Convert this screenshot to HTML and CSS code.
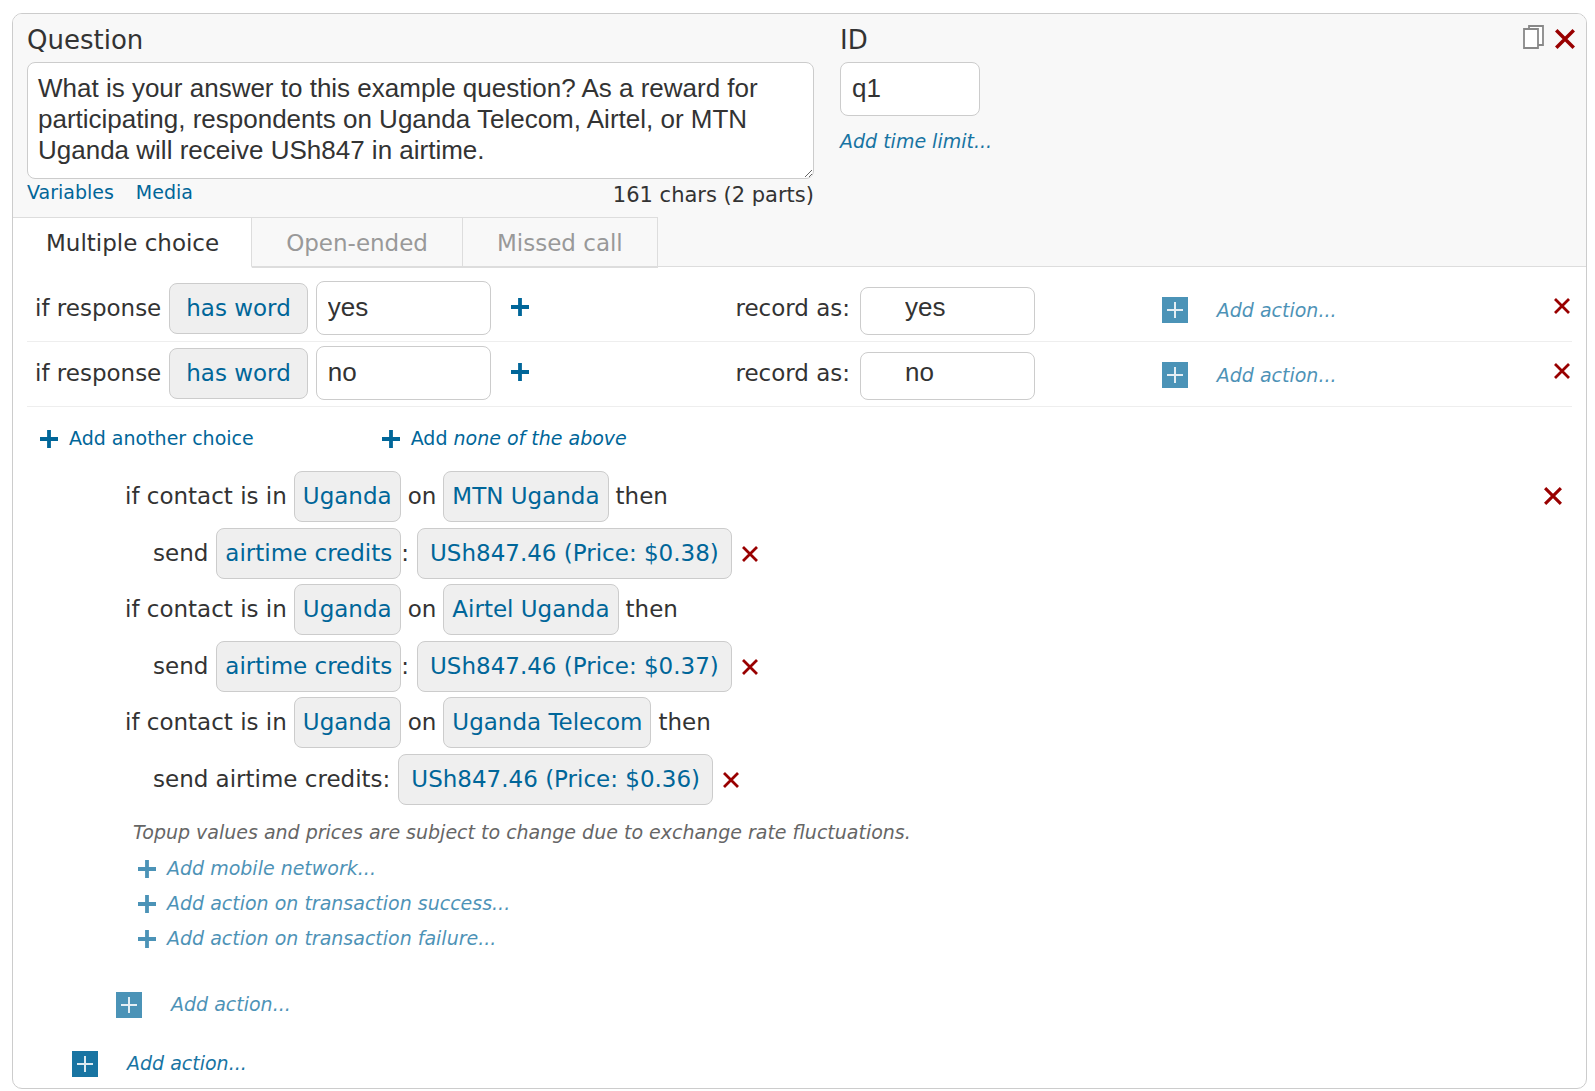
FILE: index.html
```html
<!DOCTYPE html>
<html lang="en">
<head>
  <meta charset="UTF-8">
  <title>Edit question</title>
  <link rel="stylesheet" href="styles.css">
</head>
<body>

  <svg class="sprite" aria-hidden="true">
    <symbol id="plus" viewBox="0 0 18 18">
      <path d="M9 0v18M0 9h18" fill="none" stroke="currentColor" stroke-width="3.8"/>
    </symbol>
    <symbol id="cross" viewBox="0 0 16 16">
      <path d="M1 1l14 14M15 1L1 15" fill="none" stroke="currentColor" stroke-width="2.8"/>
    </symbol>
    <symbol id="box-plus" viewBox="0 0 26 26">
      <path d="M0 0h26v26H0z" fill="currentColor"/>
      <path d="M13 5v16M5 13h16" fill="none" stroke="#fff" stroke-opacity="0.85" stroke-width="2"/>
    </symbol>
    <symbol id="copy" viewBox="0 0 21 24">
      <path d="M6 1h14v19H6z" fill="#fff" stroke="#888" stroke-width="1.8"/>
      <path d="M1 4h14v19H1z" fill="#fff" stroke="#888" stroke-width="1.8"/>
    </symbol>
  </svg>

  <form class="question">
    <div class="header">
      <div class="fields">
        <div class="field-question">
          <label class="title" for="question">Question</label>
          <textarea id="question" class="text" rows="3">What is your answer to this example question? As a reward for participating, respondents on Uganda Telecom, Airtel, or MTN Uganda will receive USh847 in airtime.</textarea>
          <div class="under">
            <div class="tools">
              <a href="#">Variables</a>
              <a href="#">Media</a>
            </div>
            <span class="chars">161 chars (2 parts)</span>
          </div>
        </div>
        <div class="field-id">
          <label class="title" for="qid">ID</label>
          <input type="text" id="qid" class="text" value="q1">
          <a href="#" class="time-limit">Add time limit...</a>
        </div>
        <div class="corner">
          <button type="button" class="icon" aria-label="Copy question"><svg width="21" height="24"><use href="#copy"/></svg></button>
          <button type="button" class="icon remove" aria-label="Delete question"><svg width="20" height="20"><use href="#cross"/></svg></button>
        </div>
      </div>
      <div class="tabs" role="tablist">
        <button type="button" role="tab" class="tab active" aria-selected="true">Multiple choice</button>
        <button type="button" role="tab" class="tab">Open-ended</button>
        <button type="button" role="tab" class="tab">Missed call</button>
      </div>
    </div>

    <div class="choices">
      <div class="choice">
        <div class="cell">
          <label for="word1">if response</label>
          <button type="button" class="pick wide">has word</button>
          <input type="text" id="word1" class="text" value="yes">
          <button type="button" class="icon add" aria-label="Add word"><svg width="18" height="18"><use href="#plus"/></svg></button>
        </div>
        <div class="cell record-cell">
          <label for="record1">record as:</label>
          <input type="text" id="record1" class="text record" value="yes">
        </div>
        <a href="#" class="action light"><svg width="26" height="26"><use href="#box-plus"/></svg>Add action...</a>
        <button type="button" class="icon remove" aria-label="Remove choice"><svg width="16" height="16"><use href="#cross"/></svg></button>
      </div>
      <div class="choice">
        <div class="cell">
          <label for="word2">if response</label>
          <button type="button" class="pick wide">has word</button>
          <input type="text" id="word2" class="text" value="no">
          <button type="button" class="icon add" aria-label="Add word"><svg width="18" height="18"><use href="#plus"/></svg></button>
        </div>
        <div class="cell record-cell">
          <label for="record2">record as:</label>
          <input type="text" id="record2" class="text record" value="no">
        </div>
        <a href="#" class="action light"><svg width="26" height="26"><use href="#box-plus"/></svg>Add action...</a>
        <button type="button" class="icon remove" aria-label="Remove choice"><svg width="16" height="16"><use href="#cross"/></svg></button>
      </div>
    </div>

    <div class="more">
      <a href="#" class="add-link"><svg width="18" height="18"><use href="#plus"/></svg><span>Add another choice</span></a>
      <a href="#" class="add-link"><svg width="18" height="18"><use href="#plus"/></svg><span>Add <em>none of the above</em></span></a>
    </div>

    <div class="rules">
      <div class="rule-list">
        <div class="rule">
          <div class="line">
            <span>if contact is in</span>
            <button type="button" class="pick">Uganda</button>
            <span>on</span>
            <button type="button" class="pick">MTN Uganda</button>
            <span>then</span>
          </div>
          <div class="line send">
            <span>send</span>
            <span><button type="button" class="pick">airtime credits</button>:</span>
            <button type="button" class="pick price">USh847.46 (Price: $0.38)</button>
            <button type="button" class="icon remove" aria-label="Remove"><svg width="16" height="16"><use href="#cross"/></svg></button>
          </div>
        </div>
        <div class="rule">
          <div class="line">
            <span>if contact is in</span>
            <button type="button" class="pick">Uganda</button>
            <span>on</span>
            <button type="button" class="pick">Airtel Uganda</button>
            <span>then</span>
          </div>
          <div class="line send">
            <span>send</span>
            <span><button type="button" class="pick">airtime credits</button>:</span>
            <button type="button" class="pick price">USh847.46 (Price: $0.37)</button>
            <button type="button" class="icon remove" aria-label="Remove"><svg width="16" height="16"><use href="#cross"/></svg></button>
          </div>
        </div>
        <div class="rule">
          <div class="line">
            <span>if contact is in</span>
            <button type="button" class="pick">Uganda</button>
            <span>on</span>
            <button type="button" class="pick">Uganda Telecom</button>
            <span>then</span>
          </div>
          <div class="line send">
            <span>send airtime credits:</span>
            <button type="button" class="pick price">USh847.46 (Price: $0.36)</button>
            <button type="button" class="icon remove" aria-label="Remove"><svg width="16" height="16"><use href="#cross"/></svg></button>
          </div>
        </div>
        <p class="note">Topup values and prices are subject to change due to exchange rate fluctuations.</p>
        <div class="links">
          <a href="#" class="add-link light"><svg width="18" height="18"><use href="#plus"/></svg><em>Add mobile network...</em></a>
          <a href="#" class="add-link light"><svg width="18" height="18"><use href="#plus"/></svg><em>Add action on transaction success...</em></a>
          <a href="#" class="add-link light"><svg width="18" height="18"><use href="#plus"/></svg><em>Add action on transaction failure...</em></a>
        </div>
      </div>
      <button type="button" class="icon remove" aria-label="Remove rules"><svg width="18" height="18"><use href="#cross"/></svg></button>
    </div>

    <div class="actions">
      <a href="#" class="action light nested"><svg width="26" height="26"><use href="#box-plus"/></svg>Add action...</a>
      <a href="#" class="action"><svg width="26" height="26"><use href="#box-plus"/></svg>Add action...</a>
    </div>
  </form>

</body>
</html>
```

FILE: styles.css
```css
* {
  box-sizing: border-box;
}
body {
  margin: 13px 8px 0 12px;
  background-color: #fff;
  color: #333;
  font-family: Verdana, "DejaVu Sans", sans-serif;
  font-size: 23px;
  line-height: 27px;
}
a {
  color: #069;
  font-size: 19px;
  text-decoration: none;
}
svg {
  display: block;
  flex: none;
}
.sprite {
  position: absolute;
  width: 0;
  height: 0;
}
.question {
  border: 1px solid #ccc;
  border-radius: 10px;
  overflow: hidden;
}

/* header */
.header {
  background-color: #f8f8f8;
  border-bottom: 1px solid #ddd;
}
.fields {
  display: grid;
  grid-template-columns: 787fr 160px 549fr;
  column-gap: 26px;
  padding: 9px 11px 0 14px;
}
.title {
  display: block;
  margin-bottom: 5px;
  font-size: 26px;
  line-height: 34px;
}
.text {
  display: block;
  border: 1px solid #ccc;
  border-radius: 8px;
  background-color: #fff;
  color: #333;
  font-family: Arial, "Liberation Sans", sans-serif;
  font-size: 26px;
}
input.text {
  width: 175px;
  height: 54px;
  padding: 0 11px 2px;
}
textarea.text {
  width: 100%;
  padding: 10px 10px 12px;
  line-height: 31px;
}
.field-id input.text {
  width: 140px;
}
.under {
  display: flex;
  justify-content: space-between;
  line-height: 26px;
}
.tools {
  display: flex;
  gap: 22px;
}
.chars {
  padding-top: 3px;
  font-size: 21px;
}
.time-limit {
  display: block;
  margin-top: 12px;
  font-style: italic;
  white-space: nowrap;
  opacity: 0.9;
}
.corner {
  display: flex;
  justify-content: flex-end;
  align-items: flex-start;
  gap: 11px;
  padding-top: 2px;
}
.corner .remove {
  margin-top: 4px;
}
.icon {
  padding: 0;
  border: none;
  background: none;
  cursor: pointer;
}
.remove {
  color: #900;
}
.add {
  margin-left: 12px;
  color: #069;
}
.tabs {
  display: flex;
  margin: 9px 0 -2px;
}
.tab {
  height: 51px;
  padding: 2px 34px 0;
  border: solid #ddd;
  border-width: 1px 1px 2px 0;
  background-color: #f8f8f8;
  color: #999;
  font: inherit;
  cursor: pointer;
}
.tab.active {
  padding: 2px 32px 0 33px;
  border-bottom-color: #fff;
  background-color: #fff;
  color: #333;
}

/* choices */
.choices {
  padding: 10px 14px 0;
}
.choice {
  display: grid;
  grid-template-columns: 700fr 426fr 392fr 18px;
  align-items: baseline;
  padding: 4px 0 6px 8px;
  border-bottom: 1px solid #eee;
}
.cell {
  display: flex;
  align-items: baseline;
  gap: 8px;
}
.record-cell {
  gap: 10px;
}
.pick {
  height: 51px;
  padding: 0 8px;
  border: 1px solid #ccc;
  border-radius: 8px;
  background-color: #efefef;
  color: #069;
  font: inherit;
  cursor: pointer;
}
.pick.wide {
  padding: 0 16px;
}
.pick.price {
  padding: 0 12px;
}
input.record {
  height: 48px;
  padding: 0 11px 8px 44px;
}
.action {
  display: flex;
  align-items: center;
  gap: 29px;
  font-style: italic;
  opacity: 0.9;
}
.add-link {
  display: flex;
  align-items: center;
  gap: 11px;
}
.light {
  opacity: 0.7;
}
.choice .action {
  align-self: center;
  margin-top: 4px;
}
.choice .remove {
  align-self: start;
  margin-top: 17px;
}
.more {
  display: flex;
  gap: 128px;
  padding: 18px 27px 0;
}

/* rules */
.rules {
  display: flex;
  justify-content: space-between;
  align-items: flex-start;
  padding: 19px 24px 0 112px;
}
.rules > .remove {
  margin-top: 16px;
}
.rule {
  margin-bottom: 5px;
}
.line {
  display: flex;
  align-items: center;
  gap: 7px;
}
.line.send {
  gap: 8px;
  margin-top: 6px;
  padding-left: 28px;
}
.line .remove {
  margin-left: 2px;
}
.note {
  margin: 14px 0 9px 8px;
  color: #666;
  font-size: 19px;
  font-style: italic;
}
.links {
  display: flex;
  flex-direction: column;
  gap: 8px;
  padding-left: 13px;
}
.actions {
  display: flex;
  flex-direction: column;
  gap: 32px;
  padding: 39px 0 11px 59px;
}
.nested {
  margin-left: 44px;
}
```
